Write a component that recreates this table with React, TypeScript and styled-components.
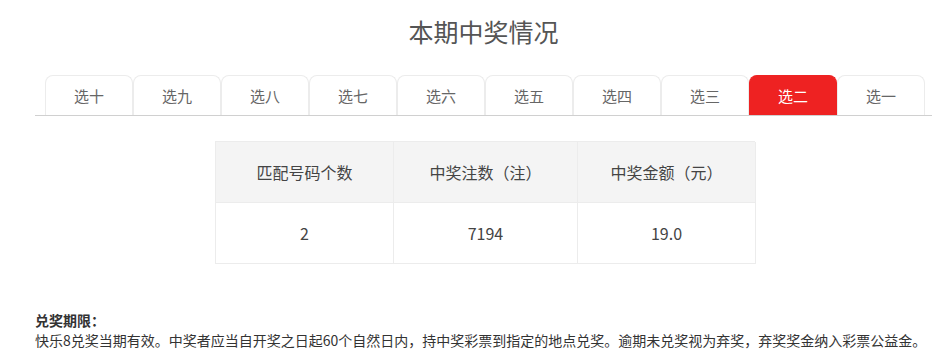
import styled, { createGlobalStyle } from "styled-components";

const GlobalStyle = createGlobalStyle`
    body{
        margin: 0;
        background: #fff;
        font-family: "Noto Sans CJK SC", "Noto Sans", sans-serif;
    }
`

const StyledPage = styled.div`

    width: 897px;
    margin-left: 35px;
    padding-top: 11px;

    .pageTitle{
        margin: 0;
        height: 40px;
        line-height: 40px;
        text-align: center;
        font-size: 25px;
        font-weight: 400;
        color: #555;
    }
`

const TabBar = styled.ul`
    display: flex;
    margin: 24px 0 0 0;
    padding: 0 0 0 10px;
    list-style: none;
    border-bottom: 1px solid #d0d0d0;
`

const Tab = styled.li<{ $active?: boolean }>`
    box-sizing: border-box;
    width: 88px;
    height: 40px;
    line-height: 40px;
    text-align: center;
    font-size: 15px;
    color: ${(p) => (p.$active ? "#fff" : "#666")};
    background: ${(p) => (p.$active ? "#ee2222" : "#fff")};
    border: 1px solid ${(p) => (p.$active ? "#ee2222" : "#ececec")};
    border-bottom: none;
    border-radius: 8px 8px 0 0;
    cursor: pointer;
`

const PrizeTable = styled.div`
    display: grid;
    grid-template-columns: 178px 184px 178px;
    width: 540px;
    margin: 25px 0 0 180px;
    border-top: 1px solid #ececec;
    border-left: 1px solid #ececec;
    box-sizing: border-box;
`

const Cell = styled.div<{ $head?: boolean }>`
    display: flex;
    align-items: center;
    justify-content: center;
    height: 60px;
    border-right: 1px solid #ececec;
    border-bottom: 1px solid #ececec;
    font-size: 16px;
    color: #444;
    background: ${(p) => (p.$head ? "#f4f4f4" : "#fff")};
`

const Notice = styled.div`
    margin-top: 46px;
    line-height: 20px;
    color: #333;

    h4{
        margin: 0;
        font-size: 14px;
        font-weight: 700;
    }

    p{
        margin: 0;
        font-size: 14px;
        white-space: nowrap;
    }
`

const tabs = ["选十", "选九", "选八", "选七", "选六", "选五", "选四", "选三", "选二", "选一"]

const headers = ["匹配号码个数", "中奖注数（注）", "中奖金额（元）"]

const results = ["2", "7194", "19.0"]

function App(){

    return(
        <>
            <GlobalStyle />
            <StyledPage>
                <h2 className="pageTitle">本期中奖情况</h2>

                <TabBar>
                    {
                        tabs.map((tab) => (
                            <Tab key={tab} $active={tab === "选二"}>{tab}</Tab>
                        ))
                    }
                </TabBar>

                <PrizeTable>
                    {
                        headers.map((title) => (
                            <Cell key={title} $head>{title}</Cell>
                        ))
                    }
                    {
                        results.map((value) => (
                            <Cell key={value}>{value}</Cell>
                        ))
                    }
                </PrizeTable>

                <Notice>
                    <h4>兑奖期限：</h4>
                    <p>快乐8兑奖当期有效。中奖者应当自开奖之日起60个自然日内，持中奖彩票到指定的地点兑奖。逾期未兑奖视为弃奖，弃奖奖金纳入彩票公益金。</p>
                </Notice>
            </StyledPage>
        </>
    )
}

export default App
